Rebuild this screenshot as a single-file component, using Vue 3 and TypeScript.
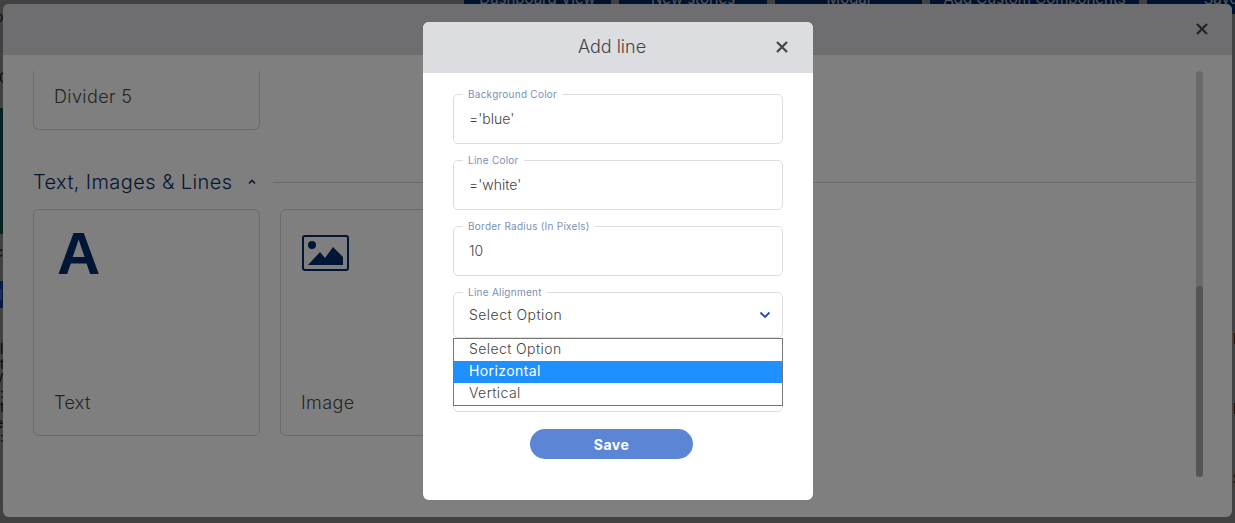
<script setup lang="ts">
interface Field { label: string; value: string }
interface TopButton { label: string; width: number }
interface Fragment { text: string; top: number; left: number }
const fields: Field[] = [
  { label: 'Background Color', value: "='blue'" },
  { label: 'Line Color', value: "='white'" },
  { label: 'Border Radius (In Pixels)', value: '10' },
]
const topButtons: TopButton[] = [
  { label: 'Dashboard View', width: 147 },
  { label: 'New stories', width: 148 },
  { label: 'Modal', width: 147 },
  { label: 'Add Custom Components', width: 209 },
  { label: 'Save', width: 148 },
]
const options = ['Select Option', 'Horizontal', 'Vertical']
const leftBits: Fragment[] = [
  { text: 'o', top: 11, left: -5 },
  { text: 'C', top: 72, left: -1 },
  { text: 'c', top: 246, left: -5 },
  { text: 'l', top: 343, left: 0 },
  { text: 't', top: 358, left: 0 },
  { text: 'V', top: 373, left: -6 },
  { text: ':', top: 387, left: 0 },
  { text: 't', top: 401, left: 0 },
  { text: 'e', top: 417, left: -5 },
  { text: ':', top: 431, left: 0 },
]
const rightBits: Fragment[] = [
  { text: 'E', top: 333, left: 1233 },
  { text: 'E', top: 403, left: 1233 },
  { text: 'S', top: 473, left: 1233 },
]
function bitStyle(b: Fragment) {
  return { top: b.top + 'px', left: b.left + 'px' }
}
</script>

<template>
  <div class="screen">
    <div class="top-strip">
      <span v-for="b in topButtons" :key="b.label" class="top-btn" :style="{ width: b.width + 'px' }">{{ b.label }}</span>
    </div>
    <div class="teal"></div>
    <div class="blue"><span class="blue-inner"></span></div>
    <span v-for="b in leftBits" :key="b.top" class="bit" :style="bitStyle(b)">{{ b.text }}</span>
    <span v-for="b in rightBits" :key="b.top" class="bit" :style="bitStyle(b)">{{ b.text }}</span>

    <section class="big-modal">
      <header class="big-head">
        <svg class="close big-close" viewBox="0 0 14 14"><path d="M2 2 12 12M12 2 2 12" /></svg>
      </header>
      <div class="big-body">
        <div class="content">
          <div class="card divider-card"><span class="card-label">Divider 5</span></div>
          <div class="section-title">
            <span class="title-text">Text, Images &amp; Lines</span>
            <svg class="caret" viewBox="0 0 10 6"><path d="M2 4.500 5 1.500 8 4.500" /></svg>
            <span class="rule"></span>
          </div>
          <div class="cards">
            <div class="card tile">
              <span class="letter-a">A</span>
              <span class="card-label">Text</span>
            </div>
            <div class="card tile">
              <svg class="img-icon" viewBox="0 0 48 36">
                <rect x="1" y="1" width="45" height="34" rx="2" />
                <circle cx="10" cy="10" r="4" />
                <path d="M6 30 18 17 23 23 31 12 41 22V30Z" />
              </svg>
              <span class="card-label">Image</span>
            </div>
          </div>
        </div>
        <div class="scrollbar"><div class="thumb"></div></div>
      </div>
    </section>

    <div class="overlay"></div>

    <section class="small-modal">
      <header class="small-head">
        <span class="small-title">Add line</span>
        <svg class="close small-close" viewBox="0 0 14 14"><path d="M2 2 12 12M12 2 2 12" /></svg>
      </header>
      <div class="small-body">
        <div v-for="f in fields" :key="f.label" class="field">
          <span class="legend">{{ f.label }}</span>
          <span class="value">{{ f.value }}</span>
        </div>
        <div class="select-wrap">
          <div class="field select-field">
            <span class="legend">Line Alignment</span>
            <span class="value select-value">Select Option</span>
            <svg class="chev" viewBox="0 0 12 8"><path d="M1.500 1.500 6 6 10.500 1.500" /></svg>
          </div>
          <div class="ghost-field"></div>
          <ul class="dropdown">
            <li v-for="o in options" :key="o" :class="{ active: o === 'Horizontal' }">{{ o }}</li>
          </ul>
        </div>
        <button class="save" type="button">Save</button>
      </div>
    </section>
  </div>
</template>

<style>
html, body { margin: 0; background: #414141; overflow: hidden; }
</style>

<style scoped>
.screen {
  position: relative;
  width: 1235px;
  height: 523px;
  overflow: hidden;
  background: #828282;
  font-family: Inter, "Liberation Sans", sans-serif;
  color: #555;
}
.top-strip {
  position: absolute;
  top: -13px;
  left: 464px;
  display: flex;
  gap: 8px;
  height: 27px;
}
.top-btn {
  flex: none;
  background: #00265c;
  color: #a8acb8;
  font-size: 15px;
  line-height: 24px;
  text-align: center;
  white-space: nowrap;
}
.teal { position: absolute; left: 0; top: 108px; height: 126px; width: 3px; background: #0d4440; }
.blue { position: absolute; left: 0; top: 281px; height: 27px; width: 3px; background: #0f358a; }
.blue-inner { position: absolute; left: 0; top: 8px; height: 11px; width: 2px; background: #3d5a96; }
.bit { position: absolute; font-size: 14px; line-height: 12px; color: #111; }
.big-modal {
  position: absolute;
  left: 3px;
  top: 4px;
  width: 1229px;
  height: 513px;
  border-radius: 6px;
  overflow: hidden;
  background: #fff;
  display: flex;
  flex-direction: column;
}
.big-head {
  height: 51px;
  flex: none;
  background: #dcdde0;
  position: relative;
}
.big-close { position: absolute; right: 23px; top: 18px; stroke: #666; }
.big-body {
  flex: 1;
  position: relative;
  min-height: 0;
  overflow: hidden;
  padding-top: 16px;
  box-sizing: border-box;
}
.content { padding: 0 30px; }
.card {
  border: 1px solid #d5d6da;
  border-radius: 6px;
  box-sizing: border-box;
  width: 227px;
  background: #fff;
}
.divider-card {
  height: 59px;
  display: flex;
  align-items: flex-end;
  padding: 0 20px 20px;
  border-top: none;
  border-radius: 0 0 6px 6px;
}
.card-label {
  font-size: 18px;
  line-height: 24px;
  font-weight: 300;
  letter-spacing: 0.4px;
  color: #4a4a4a;
}
.section-title {
  display: flex;
  align-items: center;
  margin-top: 37px;
  height: 30px;
}
.title-text {
  font-size: 20px;
  font-weight: 300;
  letter-spacing: 0.4px;
  color: #0c3068;
  white-space: nowrap;
  margin-top: -1px;
}
.caret {
  width: 10px;
  height: 6px;
  margin-left: 15px;
  fill: none;
  stroke: #0c3068;
  stroke-width: 1.600;
  flex: none;
}
.rule { flex: 1; height: 1px; background: #d5d6da; margin-left: 16px; margin-right: 6px; }
.cards { display: flex; gap: 20px; margin-top: 12px; }
.tile {
  height: 227px;
  padding: 20px;
  display: flex;
  flex-direction: column;
  justify-content: space-between;
  align-items: flex-start;
}
.letter-a {
  font-family: "Liberation Sans", sans-serif;
  font-weight: 700;
  font-size: 60px;
  line-height: 48px;
  margin-left: 3px;
  color: #002c6c;
}
.img-icon { width: 48px; height: 36px; margin: 5px 0 0 1px; }
.img-icon rect { fill: none; stroke: #002c6c; stroke-width: 2; }
.img-icon circle, .img-icon path { fill: #002c6c; }
.scrollbar {
  position: absolute;
  right: 29px;
  top: 16px;
  bottom: 40px;
  width: 7px;
  border-radius: 4px;
  background: #d5d5d5;
}
.thumb {
  position: absolute;
  left: 0;
  right: 0;
  top: 215px;
  bottom: 0;
  border-radius: 4px;
  background: #aaa;
}
.overlay {
  position: absolute;
  inset: 0;
  background: rgba(0, 0, 0, 0.5);
}
.small-modal {
  position: absolute;
  left: 423px;
  top: 22px;
  width: 390px;
  height: 478px;
  background: #fff;
  border-radius: 6px;
  overflow: hidden;
}
.small-head {
  height: 51px;
  box-sizing: border-box;
  padding: 0 12px 2px 0;
  background: #dcdde0;
  display: flex;
  align-items: center;
  justify-content: center;
  position: relative;
}
.small-title { font-size: 18px; font-weight: 300; color: #444; }
.close { width: 14px; height: 14px; fill: none; stroke: #4a4a4a; stroke-width: 2.400; }
.small-close { position: absolute; right: 24px; top: 18px; }
.small-body {
  padding: 21px 30px 0;
  display: flex;
  flex-direction: column;
  gap: 16px;
}
.field {
  position: relative;
  box-sizing: border-box;
  height: 50px;
  border: 1px solid #dcdde0;
  border-radius: 5px;
  padding: 13px 15px 0;
}
.legend {
  position: absolute;
  top: -7px;
  left: 9px;
  padding: 0 5px;
  background: #fff;
  font-size: 10px;
  line-height: 12px;
  letter-spacing: 0.25px;
  color: #7a90b5;
  white-space: nowrap;
}
.value { font-size: 14px; line-height: 20px; font-weight: 300; color: #444; }
.select-wrap { position: relative; height: 120px; }
.select-field { padding-top: 11px; height: 46px; }
.select-value { letter-spacing: 0.45px; }
.chev {
  position: absolute;
  right: 11px;
  top: 18px;
  width: 12px;
  height: 8px;
  fill: none;
  stroke: #1b4db3;
  stroke-width: 1.800;
}
.ghost-field {
  position: absolute;
  left: 0;
  right: 0;
  top: 100px;
  height: 20px;
  border: 1px solid #dcdde0;
  border-radius: 5px;
  box-sizing: border-box;
}
.dropdown {
  position: absolute;
  left: 0;
  right: 0;
  top: 46px;
  margin: 0;
  padding: 0;
  list-style: none;
  background: #fff;
  border: 1px solid #767676;
  box-sizing: border-box;
  height: 68px;
  font-size: 14px;
  font-weight: 300;
  letter-spacing: 0.4px;
  color: #444;
}
.dropdown li { height: 22px; line-height: 20px; padding-left: 15px; }
.dropdown li.active { background: #1e90ff; color: #fff; font-weight: 400; }
.save {
  align-self: flex-start;
  margin-left: 77px;
  width: 163px;
  height: 30px;
  margin-top: 1px;
  border: none;
  border-radius: 15px;
  background: #5b86d6;
  color: #fff;
  font: 700 14px Inter, sans-serif;
  letter-spacing: 0.5px;
}
</style>
